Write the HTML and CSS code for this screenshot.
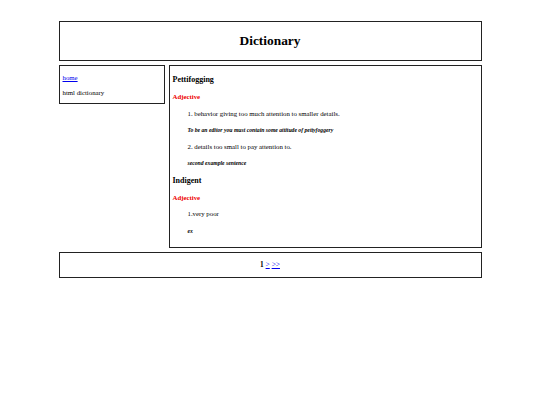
FILE: index.html
```html
<!DOCTYPE html>
<html>
<head>
<meta charset="utf-8">
<title>Dictionary</title>
<link rel="stylesheet" href="styles.css">
</head>
<body>
<div class="page">
  <header class="box header"><h1>Dictionary</h1></header>
  <div class="middle">
    <nav class="box side">
      <a href="#" class="row">home</a>
      <div class="row">html dictionary</div>
    </nav>
    <main class="box content">
      <h3 class="word">Pettifogging</h3>
      <h4 class="pos">Adjective</h4>
      <p class="def">1. behavior giving too much attention to smaller details.</p>
      <p class="ex">To be an editor you must contain some attitude of pettyfoggery</p>
      <p class="def">2. details too small to pay attention to.</p>
      <p class="ex">second example sentence</p>
      <h3 class="word">Indigent</h3>
      <h4 class="pos">Adjective</h4>
      <p class="def">1.very poor</p>
      <p class="ex">ex</p>
    </main>
  </div>
  <footer class="box footer"><b>1</b> <a href="#">&gt;</a> <a href="#">&gt;&gt;</a></footer>
</div>
</body>
</html>
```

FILE: styles.css
```css
html, body {
  margin: 0;
  padding: 0;
  background: #fff;
}
body {
  font-family: "Liberation Serif", "Times New Roman", serif;
  font-size: 6.8px;
  color: #000;
}
.page {
  width: 423px;
  margin: 0 auto;
  padding-top: 21px;
  display: flex;
  flex-direction: column;
  gap: 4px;
}
.box {
  border: 1px solid #222;
  box-sizing: border-box;
}
.header {
  height: 40px;
}
.header h1 {
  margin: 0;
  font-size: 13.4px;
  line-height: 38px;
  text-align: center;
  font-weight: bold;
}
.middle {
  display: flex;
  align-items: flex-start;
  gap: 4px;
}
.side {
  width: 106px;
  padding: 4px 3px 3px;
  display: flex;
  flex-direction: column;
}
.side .row {
  line-height: 15px;
}
a {
  color: #00e;
  text-decoration: underline;
}
.side a {
  align-self: flex-start;
}
.content {
  flex: 1;
  padding: 5px 3px 8px;
}
.content h3, .content h4, .content p {
  margin: 0;
}
.word {
  font-size: 8px;
  line-height: 18px;
  font-weight: bold;
}
.pos {
  font-size: 6.8px;
  line-height: 16.5px;
  color: #e00;
  font-weight: bold;
}
.def {
  line-height: 16.5px;
  padding-left: 15px;
}
.ex {
  font-size: 5.7px;
  line-height: 16.5px;
  padding-left: 15px;
  font-weight: bold;
  font-style: italic;
}
.footer {
  height: 26px;
  line-height: 24px;
  text-align: center;
  font-size: 7.4px;
}
```
